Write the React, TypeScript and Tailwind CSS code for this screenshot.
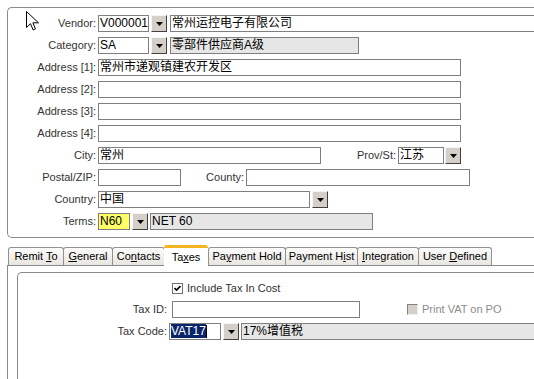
import type { ReactNode } from "react"

const LATIN = "font-['Liberation_Sans','Noto_Sans_CJK_SC',sans-serif]"

function DropButton() {
  return (
    <div className="w-[16px] h-[17px] shrink-0 bg-[#d4d0c8] border border-t-[#f4f4f4] border-l-[#f4f4f4] border-r-[#404040] border-b-[#404040] flex items-center justify-center">
      <svg width="7" height="4" viewBox="0 0 7 4">
        <path d="M0 0h7L3.5 4z" fill="#000" />
      </svg>
    </div>
  )
}

function Field({
  w,
  children,
  className = "bg-white",
}: {
  w: string
  children?: ReactNode
  className?: string
}) {
  return (
    <div
      className={`${w} h-[17px] shrink-0 border border-[#7f7f7f] pl-[1px] text-[12px] leading-[15px] text-black whitespace-nowrap overflow-hidden ${className}`}
    >
      {children}
    </div>
  )
}

function Label({ w, children }: { w: string; children: ReactNode }) {
  return (
    <span className={`${w} shrink-0 text-right text-[11px] text-[#333] pr-[2px]`}>
      {children}
    </span>
  )
}

function Row({ children }: { children: ReactNode }) {
  return <div className="flex items-center h-[17px]">{children}</div>
}

function Checkbox({ disabled }: { disabled?: boolean }) {
  if (disabled) {
    return (
      <div className="w-[11px] h-[11px] shrink-0 bg-[#d4d0c8] border border-t-[#808080] border-l-[#808080] border-r-[#f0f0f0] border-b-[#f0f0f0]" />
    )
  }
  return (
    <div className="w-[11px] h-[11px] shrink-0 bg-white border border-[#6f6f6f] flex items-center justify-center">
      <svg width="7" height="7" viewBox="0 0 7 7">
        <path d="M0.5 3l2 2L6.5 1" stroke="#000" strokeWidth="1.6" fill="none" />
      </svg>
    </div>
  )
}

const tabs = [
  { w: "w-[56px]", label: <span>Remit <u>T</u>o</span> },
  { w: "w-[50px]", label: <span><u>G</u>eneral</span> },
  { w: "w-[53px]", label: <span>Co<u>n</u>tacts</span> },
  { w: "w-[44px]", label: <span>Ta<u>x</u>es</span>, active: true },
  { w: "w-[78px]", label: <span>Pa<u>y</u>ment Hold</span> },
  { w: "w-[73px]", label: <span>Payment H<u>i</u>st</span> },
  { w: "w-[62px]", label: <span><u>I</u>ntegration</span> },
  { w: "w-[74px]", label: <span>User <u>D</u>efined</span> },
]

export default function App() {
  return (
    <div className={`relative w-[534px] h-[379px] overflow-hidden bg-white ${LATIN}`}>
      {/* vendor header box */}
      <div className="pt-[7px] pl-[7px]">
        <div className="border-l border-t border-b border-[#8a8a8a] rounded-tl-[5px] rounded-bl-[5px] pt-[7px] pb-[7px] flex flex-col gap-[5px]">
          <Row>
            <Label w="w-[90px]">Vendor:</Label>
            <Field w="w-[51px]">V000001</Field>
            <div className="ml-[2px]"><DropButton /></div>
            <Field w="w-[400px] ml-[3px]">常州运控电子有限公司</Field>
          </Row>
          <Row>
            <Label w="w-[90px]">Category:</Label>
            <Field w="w-[51px]">SA</Field>
            <div className="ml-[2px]"><DropButton /></div>
            <Field w="w-[189px] ml-[3px]" className="bg-[#e6e6e6]">零部件供应商A级</Field>
          </Row>
          <Row>
            <Label w="w-[90px]">Address [1]:</Label>
            <Field w="w-[363px]">常州市递观镇建农开发区</Field>
          </Row>
          <Row>
            <Label w="w-[90px]">Address [2]:</Label>
            <Field w="w-[363px]" />
          </Row>
          <Row>
            <Label w="w-[90px]">Address [3]:</Label>
            <Field w="w-[363px]" />
          </Row>
          <Row>
            <Label w="w-[90px]">Address [4]:</Label>
            <Field w="w-[363px]" />
          </Row>
          <Row>
            <Label w="w-[90px]">City:</Label>
            <Field w="w-[223px]">常州</Field>
            <Label w="w-[77px]">Prov/St:</Label>
            <Field w="w-[46px]">江苏</Field>
            <div className="ml-[1px]"><DropButton /></div>
          </Row>
          <Row>
            <Label w="w-[90px]">Postal/ZIP:</Label>
            <Field w="w-[83px]" />
            <Label w="w-[65px]">County:</Label>
            <Field w="w-[224px]" />
          </Row>
          <Row>
            <Label w="w-[90px]">Country:</Label>
            <Field w="w-[212px]">中国</Field>
            <div className="ml-[2px]"><DropButton /></div>
          </Row>
          <Row>
            <Label w="w-[90px]">Terms:</Label>
            <Field w="w-[32px]" className="bg-[#ffff66]">N60</Field>
            <div className="ml-[2px]"><DropButton /></div>
            <Field w="w-[223px] ml-[2px]" className="bg-[#e6e6e6]">NET 60</Field>
          </Row>
        </div>
      </div>

      {/* tab strip */}
      <div className="pl-[7px] mt-[6px]">
        <div className="flex items-end h-[21px] pl-[1px]">
          {tabs.map((t, i) =>
            t.active ? (
              <div
                key={i}
                className={`${t.w} h-[21px] shrink-0 bg-white border-t-[3px] border-t-[#f5b521] rounded-t-[3px] flex items-center justify-center text-[11px] text-black -mb-[1px] relative z-10`}
              >
                {t.label}
              </div>
            ) : (
              <div
                key={i}
                className={`${t.w} h-[18px] shrink-0 bg-gradient-to-b from-[#fcfcfb] to-[#e8e6e0] border border-b-0 border-[#919191] rounded-t-[3px] flex items-center justify-center text-[11px] text-black mr-[-1px]`}
              >
                {t.label}
              </div>
            )
          )}
        </div>
        {/* tab page */}
        <div className="border-l border-t border-[#8a8a8a] h-[200px] pl-[9px] pt-[6px]">
          <div className="border-l border-t border-[#8a8a8a] rounded-tl-[5px] h-[200px] pt-[7px] flex flex-col gap-[4px]">
            <Row>
              <span className="w-[154px] shrink-0" />
              <Checkbox />
              <span className="ml-[4px] text-[11px] text-[#333]">Include Tax In Cost</span>
            </Row>
            <div className="flex flex-col gap-[5px]">
              <Row>
                <Label w="w-[151px]">Tax ID:</Label>
                <span className="w-[3px]" />
                <Field w="w-[188px]" />
                <span className="w-[47px]" />
                <Checkbox disabled />
                <span className="ml-[4px] text-[11px] text-[#8c8c8c]">Print VAT on PO</span>
              </Row>
              <Row>
                <Label w="w-[151px]">Tax Code:</Label>
                <span className="w-[3px]" />
                <Field w="w-[52px]">
                  <span className="bg-[#0a246a] text-white">VAT17</span>
                  <span className="inline-block w-px h-[13px] bg-black align-middle" />
                </Field>
                <div className="ml-[2px]"><DropButton /></div>
                <Field w="w-[300px] ml-[2px]" className="bg-[#e6e6e6]">17%增值税</Field>
              </Row>
            </div>
          </div>
        </div>
      </div>

      {/* mouse pointer */}
      <svg className="absolute left-[26px] top-[11px]" width="13" height="21" viewBox="0 0 13 21">
        <path
          d="M0.5 0.5v16l4-3.8 2.6 6.2 2.4-1-2.6-6.1h5.6z"
          fill="#fff"
          stroke="#000"
          strokeWidth="1"
          strokeLinejoin="miter"
        />
      </svg>
    </div>
  )
}
